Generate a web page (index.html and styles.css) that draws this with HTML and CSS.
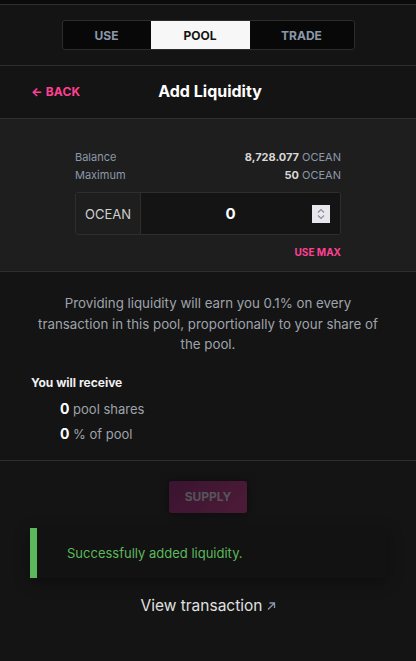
FILE: index.html
```html
<!DOCTYPE html>
<html>
<head>
<meta charset="utf-8">
<link rel="stylesheet" href="styles.css">
</head>
<body>
<div class="topstrip"></div>
<main class="card">
  <nav class="tabs">
    <button class="tab">USE</button>
    <button class="tab active">POOL</button>
    <button class="tab">TRADE</button>
  </nav>
  <header class="head">
    <a class="back">← BACK</a>
    <h1 class="title">Add Liquidity</h1>
  </header>
  <section class="pool">
    <div class="inner">
      <div class="row"><span class="lbl">Balance</span><span class="val"><b>8,728.077</b> OCEAN</span></div>
      <div class="row"><span class="lbl">Maximum</span><span class="val"><b>50</b> OCEAN</span></div>
      <div class="input">
        <div class="token">OCEAN</div>
        <div class="field">
          <span class="num">0</span>
          <span class="spin">
            <svg width="18" height="18" viewBox="0 0 18 18"><path d="M6 7.5 L9 4.5 L12 7.5" fill="none" stroke="#8f8c99" stroke-width="1.2"/><path d="M6 10.5 L9 13.5 L12 10.5" fill="none" stroke="#8f8c99" stroke-width="1.2"/></svg>
          </span>
        </div>
      </div>
      <div class="usemax">USE MAX</div>
    </div>
  </section>
  <section class="info">
    <p class="desc">Providing liquidity will earn you 0.1% on every transaction in this pool, proportionally to your share of the pool.</p>
    <h2 class="recv">You will receive</h2>
    <ul class="list">
      <li><b>0</b> pool shares</li>
      <li><b>0</b> % of pool</li>
    </ul>
  </section>
  <section class="actions">
    <button class="supply">SUPPLY</button>
    <div class="alert">Successfully added liquidity.</div>
    <a class="view">View transaction <svg class="ext" width="10" height="10" viewBox="0 0 10 10"><path d="M2 8.5 L8.5 2 M3.5 2 H8.5 V7" fill="none" stroke="#8b98a9" stroke-width="1.3"/></svg></a>
  </section>
</main>
</body>
</html>
```
FILE: styles.css
```css
* { box-sizing: border-box; }
html, body { margin: 0; padding: 0; background: #141414; }
body {
  font-family: "Inter", "Open Sans", sans-serif;
  color: #e0e0e0;
  height: 661px;
  overflow: hidden;
}
.topstrip { height: 4px; background: #0b0b0b; }
.card {
  border-top: 1px solid #2e2e2e;
  background: #141414;
}
.tabs {
  display: flex;
  width: 293px;
  margin: 15px auto 0;
  border: 1px solid #2c2c2c;
  border-radius: 3px;
  background: #080808;
  overflow: hidden;
  height: 30px;
}
.tab {
  border: 0;
  background: transparent;
  color: #8b98a9;
  font-family: inherit;
  font-weight: 700;
  font-size: 12px;
  padding: 0;
  cursor: pointer;
}
.tab:nth-child(1) { width: 88px; }
.tab:nth-child(2) { width: 99px; }
.tab:nth-child(3) { flex: 1; }
.tab.active { background: #f7f7f7; color: #141414; }
.head {
  margin-top: 15px;
  border-top: 1px solid #2e2e2e;
  height: 53px;
  display: flex;
  align-items: center;
  position: relative;
  padding-left: 31px;
  padding-bottom: 2px;
}
.back { color: #ff4092; font-weight: 700; font-size: 12px; letter-spacing: 0.2px; }
.title {
  position: absolute;
  left: 0; right: 0;
  top: 0; bottom: 3px;
  display: flex;
  align-items: center;
  justify-content: center;
  margin: 0;
  padding-left: 4px;
  font-size: 16px;
  font-weight: 700;
  color: #fff;
  pointer-events: none;
}
.pool {
  border-top: 1px solid #2e2e2e;
  border-bottom: 1px solid #2e2e2e;
  background: #1e1e1e;
  padding: 29px 0 12px;
}
.inner { width: 266px; margin: 0 auto; }
.row {
  display: flex;
  justify-content: space-between;
  font-size: 11px;
  line-height: 18px;
  color: #8b98a9;
}
.val b { color: #d8d8d8; font-weight: 700; }
.input {
  margin-top: 8px;
  display: flex;
  height: 43px;
  border: 1px solid #2e2e2e;
  border-radius: 3px;
  overflow: hidden;
}
.token {
  width: 65px;
  border-right: 1px solid #2e2e2e;
  background: #1e1e1e;
  display: flex;
  align-items: center;
  justify-content: center;
  font-size: 13px;
  color: #cfcfcf;
}
.field {
  flex: 1;
  background: #141414;
  display: flex;
  align-items: center;
  justify-content: center;
  position: relative;
  padding-right: 20px;
}
.num { font-size: 15px; font-weight: 700; color: #fff; }
.spin {
  position: absolute;
  right: 10px;
  top: 12px;
  width: 18px;
  height: 18px;
  background: #e9e7ee;
  display: block;
}
.spin svg { display: block; }
.usemax {
  text-align: right;
  color: #ff4092;
  font-weight: 700;
  font-size: 10px;
  margin-top: 10px;
  line-height: 14px;
}
.info {
  padding: 21px 28px 13px;
  border-bottom: 1px solid #2e2e2e;
}
.desc {
  margin: 0;
  text-align: center;
  color: #9ea3ab;
  font-size: 13.3px;
  line-height: 20.5px;
  padding: 0 4px;
}
.recv {
  margin: 19px 0 0 3px;
  font-size: 12px;
  font-weight: 700;
  color: #f0f0f0;
  line-height: 18px;
}
.list {
  list-style: none;
  margin: 5px 0 0;
  padding: 0 0 0 32px;
  color: #9ea3ab;
  font-size: 13px;
}
.list li { height: 25px; line-height: 25px; }
.list b { color: #fff; font-size: 14px; font-weight: 700; line-height: 1; }
.actions {
  display: flex;
  flex-direction: column;
  align-items: center;
  padding: 20px 30px 0;
}
.supply {
  width: 78px;
  height: 32px;
  border: 0;
  border-radius: 3px;
  background: linear-gradient(135deg, #3a1430, #4d1b37);
  color: #55555a;
  font-family: inherit;
  font-weight: 700;
  font-size: 12px;
  box-shadow: 0 0 8px rgba(0,0,0,0.5);
}
.alert {
  margin-top: 15px;
  align-self: stretch;
  margin-right: -1px;
  height: 50px;
  border-left: 7px solid #5cb85c;
  background: #121212;
  box-shadow: 0 4px 14px rgba(0,0,0,0.35);
  display: flex;
  align-items: center;
  padding-left: 30px;
  color: #5cb85c;
  font-size: 13px;
}
.view {
  margin-top: 18px;
  color: #e0e0e0;
  font-size: 15.5px;
  display: flex;
  align-items: center;
  gap: 3px;
}
.ext { margin-top: 2px; }
```
